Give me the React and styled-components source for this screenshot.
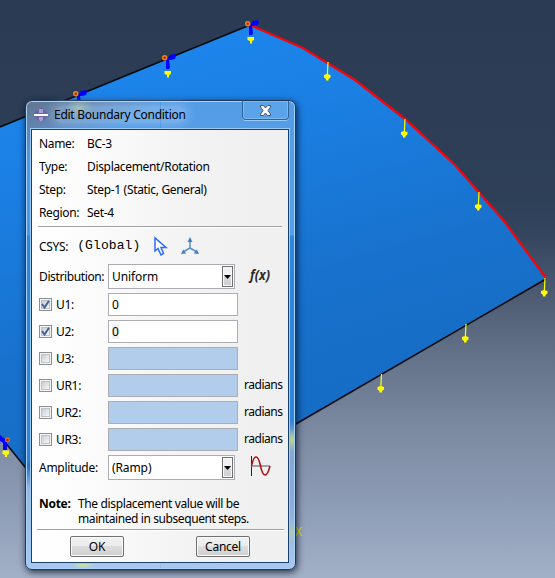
import React from "react";
import styled, { createGlobalStyle, css } from "styled-components";

const GlobalStyle = createGlobalStyle`
  * { box-sizing: border-box; }
  body { margin: 0; overflow: hidden; }
`;

const Viewport = styled.main`
  position: relative;
  width: 555px;
  height: 578px;
  overflow: hidden;
  font-family: "Noto Sans", "Open Sans", sans-serif;
  font-size: 12px;
  color: #000;
  background: linear-gradient(#2b3b53 0, #2e3f58 200px, #34455f 235px, #49586f 285px, #66758c 365px, #7b89a1 430px, #909fb8 515px, #a2b0c7 578px);
`;

const Model = styled.svg`
  position: absolute;
  inset: 0;
`;

const Window = styled.section`
  position: absolute;
  left: 25px;
  top: 100px;
  width: 271px;
  height: 470px;
  display: flex;
  flex-direction: column;
  padding: 0 6px 6px 5px;
  border: 1px solid #1c3a59;
  border-radius: 7px;
  box-shadow: inset 0 0 0 1px #a9d2f7, 1px 2px 7px rgba(0, 10, 30, 0.8);
  background:
    radial-gradient(ellipse 9px 12px at 266px 339px, rgba(190, 220, 130, 0.9), transparent),
    radial-gradient(ellipse 9px 12px at 266px 431px, rgba(190, 215, 150, 0.55), transparent),
    radial-gradient(ellipse 12px 6px at 57px 463px, rgba(215, 230, 140, 0.9), transparent),
    radial-gradient(ellipse 14px 10px at 53px 7px, rgba(190, 225, 150, 0.5), transparent),
    linear-gradient(155deg, #62758d 0, #6385b0 28px, transparent 60px),
    linear-gradient(#559ce7 0, #579fe8 134px, #2f86df 135px, #2f84dc 318px, #86a4cc 338px, #8fabd2 400px, #a9c6ee 465px) right / 50% 100% no-repeat,
    linear-gradient(#559ce7 0, #4a96e5 134px, #2f86df 135px, #2c83da 358px, #2a72bd 365px, #9bb7de 388px, #a9c6ee 465px) left / 50% 100% no-repeat;
`;

const TitleBar = styled.header`
  height: 28px;
  flex: none;
  display: flex;
  align-items: flex-start;
  padding-left: 2px;
`;

const AppIcon = styled.svg`
  margin-top: 6px;
  width: 16px;
  height: 16px;
  flex: none;
`;

const Title = styled.h1`
  margin: 5px 0 0 5px;
  font-size: 12px;
  font-weight: 400;
  line-height: 17px;
  letter-spacing: -0.26px;
  white-space: nowrap;
  border-radius: 10px;
  background: rgba(190, 218, 248, 0.3);
  box-shadow: 0 0 9px 3px rgba(190, 218, 248, 0.3);
`;

const CloseButton = styled.button`
  width: 47px;
  height: 19px;
  margin: 0 0 0 auto;
  padding: 0;
  display: flex;
  justify-content: center;
  align-items: center;
  border: 1px solid #2f6296;
  border-top: 0;
  border-radius: 0 0 4px 4px;
  background: #5ba3ea;
  box-shadow: inset 0 0 0 1px #7ab8f1, 0 1px 0 #9bcaf4;
`;

const Body = styled.div`
  flex: 1;
  display: flex;
  flex-direction: column;
  border: 1px solid #17406c;
  outline: 1px solid #9cccf5;
  background: linear-gradient(90deg, #fff 0, #fcfcfc 55px, #f4f4f4 140px, #f0f0f0 220px);
  padding: 3px 5px 0 7px;
`;

const Label = styled.span`
  white-space: nowrap;
  letter-spacing: ${(p) => p.$track ?? -0.32}px;
`;

const InfoList = styled.dl`
  margin: 0;
  display: grid;
  grid-template-columns: 48px 1fr;
  grid-auto-rows: 23px;
  line-height: 22px;
`;

const Term = styled.dt`
  letter-spacing: -0.35px;
`;

const Detail = styled.dd`
  margin: 0;
  white-space: nowrap;
  letter-spacing: -0.33px;
`;

const Divider = styled.div`
  flex: none;
  height: 2px;
  margin: ${(p) => p.$margin};
  border-top: 1px solid #a0a0a0;
  border-bottom: 1px solid #fff;
`;

const CoordRow = styled.div`
  height: 34px;
  margin-top: 2px;
  padding-bottom: 2px;
  display: flex;
  align-items: center;
`;

const SystemName = styled.span`
  font: 13px/20px "Liberation Mono", monospace;
  letter-spacing: 0.1px;
  margin-left: 9px;
`;

const FieldRow = styled.div`
  flex: none;
  height: ${(p) => (p.$select ? "25px" : "23px")};
  margin-bottom: 4px;
  display: grid;
  grid-template-columns: 69px 136px 1fr;
  align-items: center;
`;

const FieldLabel = styled.label`
  display: flex;
  align-items: center;
  gap: 4px;
`;

const Box = styled.span`
  width: 13px;
  height: 13px;
  flex: none;
  border: 1px solid #8e8f8f;
  box-shadow: inset 0 0 0 1px #f4f4f4, inset 0 0 0 2px #bfc3c8;
  background: linear-gradient(135deg, #c9ced5 20%, #f6f6f6 80%);
  svg { display: block; }
`;

const frame = css`
  border: 1px solid #abadb3;
  height: 100%;
  display: flex;
  align-items: center;
  padding-left: 3px;
  background: #fff;
`;

const Input = styled.div`
  ${frame}
  width: 130px;
  background: ${(p) => (p.$disabled ? "#b1cdeb" : "#fff")};
`;

const Select = styled.div`
  ${frame}
  width: 127px;
  justify-content: space-between;
  padding-right: 1px;
`;

const DropButton = styled.span`
  width: 11px;
  height: 21px;
  display: grid;
  place-items: center;
  border: 1px solid #707070;
  box-shadow: inset 0 0 0 1px #f8f8f8;
  background: linear-gradient(#f1f1f1 48%, #d9d9d9 50%, #cfcfcf);
`;

const Focus = styled.span`
  background: ${(p) => (p.$active ? "#f0f0f0" : "transparent")};
  line-height: 15px;
`;

const Unit = styled.span`
  letter-spacing: -0.48px;
  margin-top: -3px;
`;

const Glyph = styled.svg`
  display: block;
  margin: ${(p) => p.$margin ?? 0};
  flex: none;
  overflow: visible;
`;

const Note = styled.div`
  display: grid;
  grid-template-columns: 39px 1fr;
  margin-top: 12px;
  line-height: 15px;
  white-space: nowrap;
  letter-spacing: -0.36px;
  b { letter-spacing: -0.3px; }
  p { margin: 0; }
  p + p { grid-column: 2; letter-spacing: -0.41px; }
`;

const Actions = styled.footer`
  display: flex;
  gap: 72px;
  padding: 5px 0 0 31px;
`;

const Button = styled.button`
  width: 54px;
  height: 21px;
  padding: 0;
  font: inherit;
  line-height: 17px;
  letter-spacing: -0.25px;
  color: #000;
  border: 1px solid #707070;
  border-radius: 2px;
  box-shadow: inset 0 0 0 1px #fafafa;
  background: linear-gradient(#f2f2f2 0, #ebebeb 48%, #dddddd 50%, #cfcfcf 100%);
`;

const loads = [[328, 62], [405, 119], [479, 192], [545, 278], [466, 324], [381.5, 374]];
const constraints = [[250, 25], [167, 59], [78, 95]];

const infos = [
  ["Name:", "BC-3"],
  ["Type:", "Displacement/Rotation"],
  ["Step:", "Step-1 (Static, General)"],
  ["Region:", "Set-4"],
];

const components = [
  { name: "U1:", value: "0", on: true },
  { name: "U2:", value: "0", on: true, focus: true },
  { name: "U3:" },
  { name: "UR1:", unit: "radians" },
  { name: "UR2:", unit: "radians" },
  { name: "UR3:", unit: "radians" },
];

function Load({ x, y }) {
  return (
    <g transform={`translate(${x} ${y})`}>
      <path d="M0 0L-.7 14" stroke="#ff0" strokeWidth="1.2" />
      <path d="M-4 13L-1 12L2.5 13V15.5L.5 17V18.5H-2V17L-4 15.5Z" fill="#ff0" />
    </g>
  );
}

function Constraint({ x, y }) {
  return (
    <g transform={`translate(${x} ${y})`}>
      <path d="M0 0L3-4L8-5L9-3L8 0L4 1L2 1L3 8L2 10H-1L-1 1Z" fill="#00f" />
      <circle cx="-2.3" cy="-1.2" r="2" fill="#843711" stroke="#ff8012" strokeWidth="1.5" />
      <path d="M-2.5 12H4V15L2 16V18.5H0V16L-2.5 15Z" fill="#ff0" />
    </g>
  );
}

function Scene() {
  return (
    <Model width="555" height="578" viewBox="0 0 555 578">
      <defs>
        <linearGradient id="plate" gradientUnits="userSpaceOnUse" x1="200" y1="50" x2="300" y2="400">
          <stop offset="0" stopColor="#1d84eb" />
          <stop offset=".2" stopColor="#1b80e4" />
          <stop offset=".7" stopColor="#1871cc" />
          <stop offset="1" stopColor="#166dc5" />
        </linearGradient>
      </defs>
      <path d="M0 127L250 25L303 48L355 80L405 119L455 165L504 221L546 278L270 439L50 498L0 436Z" fill="url(#plate)" />
      <path d="M0 127L250 25M546 279L270 439M0 436L50 498" fill="none" stroke="#080d14" strokeWidth="1.7" />
      <path d="M250 25L303 48L355 80L405 119L455 165L504 221L546 278" fill="none" stroke="#f0060c" strokeWidth="2.3" />
      {loads.map(([x, y]) => <Load key={x} x={x} y={y} />)}
      {constraints.map(([x, y]) => <Constraint key={x} x={x} y={y} />)}
      <path d="M0 435L5 439V442H7V450H3V443L0 441Z" fill="#00f" />
      <circle cx="7.5" cy="440" r="1.8" fill="#6b371e" stroke="#ff6f0e" strokeWidth="1.2" />
      <path d="M2.5 450.5H9V454L7 455V457H5V455L2.5 454Z" fill="#ff0" />
      <text x="295" y="536" fill="#e5e500" fontFamily="Liberation Mono" fontSize="12">X</text>
    </Model>
  );
}

function DropDown({ value }) {
  return (
    <Select>
      <Label $track={-0.1}>{value}</Label>
      <DropButton>
        <svg width="7" height="4" viewBox="0 0 7 4"><path d="M0 0H7L3.5 4Z" /></svg>
      </DropButton>
    </Select>
  );
}

export default function App() {
  return (
    <Viewport>
      <GlobalStyle />
      <Scene />
      <Window>
        <TitleBar>
          <AppIcon viewBox="0 0 16 16">
            <path d="M8 0L11 3L14 5L16 8L14 11L11 13L8 16L5 13L2 11L0 8L2 5L5 3Z" fill="#6a66a6" />
            <path d="M6 2H10V6H6ZM6 10H10V13L8 15L6 13Z" fill="#a3a1cc" />
            <path d="M1 8H15" stroke="#fff" strokeWidth="2" />
          </AppIcon>
          <Title>Edit Boundary Condition</Title>
          <CloseButton aria-label="Close">
            <svg width="13" height="11" viewBox="0 0 13 11">
              <path d="M1.5 .5H4.5L6.5 3L8.5 .5H11.5V2L9 5.5L11.5 9V10.5H8.5L6.5 8L4.5 10.5H1.5V9L4 5.5L1.5 2Z" fill="#fff" stroke="#45566e" />
            </svg>
          </CloseButton>
        </TitleBar>
        <Body>
          <InfoList>
            {infos.map(([term, detail]) => (
              <React.Fragment key={term}>
                <Term>{term}</Term>
                <Detail>{detail}</Detail>
              </React.Fragment>
            ))}
          </InfoList>
          <Divider $margin="1px 1px 0 -1px" />
          <CoordRow>
            <Label>CSYS:</Label>
            <SystemName>(Global)</SystemName>
            <Glyph $margin="0 0 0 14px" width="13" height="19" viewBox="0 0 13 19">
              <path d="M1 1V14L4 11.5L7 18L9.5 16.5L7 10.5H12Z" fill="#fff" stroke="#2d6cff" strokeWidth="1.5" />
            </Glyph>
            <Glyph $margin="0 0 0 14px" width="18" height="18" viewBox="0 0 18 18">
              <path d="M9 2V11L2 15M9 11L16 15" fill="none" stroke="#5b91c8" strokeWidth="1.5" />
              <path d="M9 0L11.5 5H6.5ZM0 17L2.2 12.5L5.2 16.5ZM18 17L15.8 12.5L12.8 16.5Z" fill="#457fc0" />
            </Glyph>
          </CoordRow>
          <FieldRow $select>
            <Label $track={-0.38}>Distribution:</Label>
            <DropDown value="Uniform" />
            <Glyph $margin="-3px 0 0 6px" width="22" height="20" viewBox="0 0 22 20">
              <text x="0" y="15" fontFamily="Open Sans" fontSize="15" fontStyle="italic" fontWeight="700" textLength="20" lengthAdjust="spacingAndGlyphs" fill="#2b2b2b">f(x)</text>
            </Glyph>
          </FieldRow>
          {components.map((c) => (
            <FieldRow key={c.name}>
              <FieldLabel>
                <Box>
                  {c.on && (
                    <svg width="11" height="11" viewBox="0 0 11 11">
                      <path d="M2 5L4.5 8.5L9 1.8" fill="none" stroke="#4a5f97" strokeWidth="2" />
                    </svg>
                  )}
                </Box>
                <Label>{c.name}</Label>
              </FieldLabel>
              <Input $disabled={!c.on}><Focus $active={c.focus}>{c.value}</Focus></Input>
              {c.unit && <Unit>{c.unit}</Unit>}
            </FieldRow>
          ))}
          <FieldRow $select>
            <Label $track={-0.27}>Amplitude:</Label>
            <DropDown value="(Ramp)" />
            <Glyph $margin="-4px 0 0 6px" width="22" height="22" viewBox="0 0 22 22">
              <path d="M1.5 1V21" stroke="#222" />
              <path d="M1 11H20" stroke="#888" strokeWidth="1.5" />
              <path d="M1.5 11C4-1 8-1 10.5 11S17 23 20 11" fill="none" stroke="#b20c12" strokeWidth="1.5" />
            </Glyph>
          </FieldRow>
          <Note>
            <b>Note:</b>
            <p>The displacement value will be</p>
            <p>maintained in subsequent steps.</p>
          </Note>
          <Divider $margin="3px -1px 0 -2px" />
          <Actions>
            <Button>OK</Button>
            <Button>Cancel</Button>
          </Actions>
        </Body>
      </Window>
    </Viewport>
  );
}
